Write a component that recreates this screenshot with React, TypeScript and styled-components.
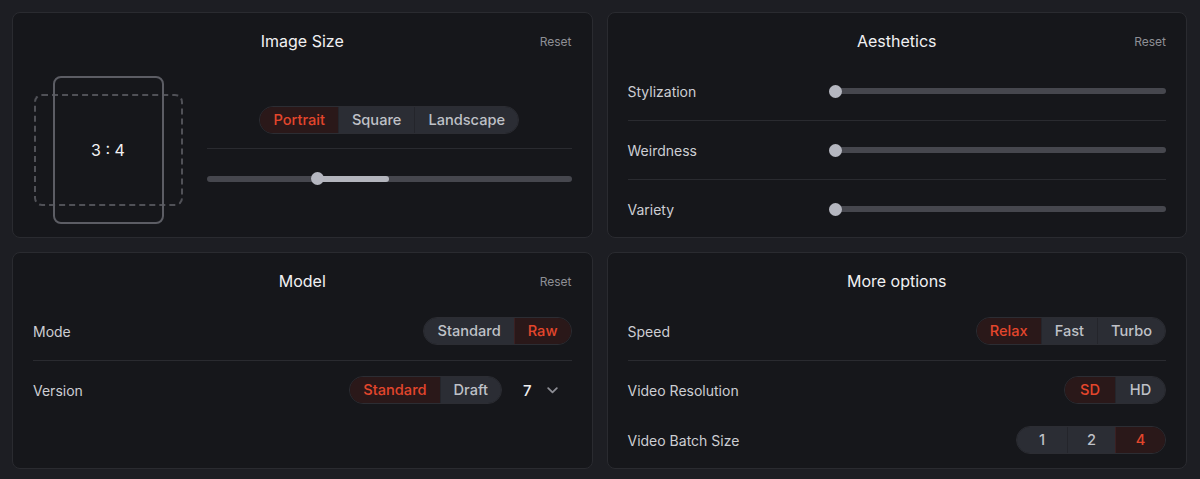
import styled, { createGlobalStyle } from "styled-components";

const GlobalStyle = createGlobalStyle`
  html, body {
    margin: 0;
    padding: 0;
    background: #1d1e23;
    font-family: Inter, "Noto Sans", sans-serif;
    color: #c9cacf;
  }
  * { box-sizing: border-box; }
`;

const Page = styled.div`
  display: grid;
  grid-template-columns: 1fr 1fr;
  grid-template-rows: 226px 217px;
  gap: 14px;
  padding: 12px 13px 12px 12px;
  width: 1200px;
  height: 479px;
`;

const Panel = styled.section`
  background: #16171b;
  border: 1px solid #2a2b30;
  border-radius: 8px;
  padding: 0 20px;
  display: flex;
  flex-direction: column;
`;

const Header = styled.div`
  display: grid;
  grid-template-columns: 1fr auto 1fr;
  align-items: center;
  padding-top: 17px;
  height: 39px;
`;

const Title = styled.h2`
  grid-column: 2;
  margin: 0;
  font-size: 16px;
  line-height: 22px;
  font-weight: 400;
  color: #f1f1f3;
`;

const Reset = styled.button`
  grid-column: 3;
  justify-self: end;
  background: none;
  border: none;
  padding: 0;
  font-family: inherit;
  font-size: 12px;
  color: #8e8f95;
  cursor: pointer;
`;

const Rows = styled.div`
  padding-top: 14px;
  display: flex;
  flex-direction: column;
`;

const Row = styled.div`
  height: 50px;
  display: flex;
  align-items: center;
  justify-content: space-between;
`;

const SliderRow = styled(Row)`
  display: grid;
  grid-template-columns: 201px 1fr;
`;

const Label = styled.span`
  font-size: 14px;
  color: #cdced3;
`;

const Divider = styled.hr<{ $gap?: string }>`
  border: none;
  height: 1px;
  background: #2a2b30;
  margin: ${(p) => p.$gap ?? "4px 0"};
  width: 100%;
`;

const Segmented = styled.div`
  display: inline-flex;
  height: 28px;
  border-radius: 14px;
  overflow: hidden;
  border: 1px solid #2c2d33;
`;

const Segment = styled.button<{ $active?: boolean; $min?: number }>`
  min-width: ${(p) => p.$min ?? 0}px;
  padding: 0 13px;
  border: none;
  border-left: 1px solid ${(p) => (p.$active ? "#3a2022" : "#24252b")};
  &:first-child {
    border-left: none;
  }
  background: ${(p) => (p.$active ? "#2a1819" : "#2b2d34")};
  color: ${(p) => (p.$active ? "#e3462c" : "#bfc1c7")};
  font-family: inherit;
  font-size: 14.6px;
  font-weight: 500;
  display: flex;
  align-items: center;
  justify-content: center;
  cursor: pointer;
`;

const SizeBody = styled.div`
  flex: 1;
  display: flex;
  align-items: center;
  gap: 24px;
  padding-top: 10px;
`;

const Preview = styled.div`
  width: 150px;
  height: 150px;
  flex: none;
  display: grid;
  place-items: center;
`;

const Frame = styled.div<{ $w: number; $h: number; $dashed?: boolean }>`
  grid-area: 1 / 1;
  width: ${(p) => p.$w}px;
  height: ${(p) => p.$h}px;
  border: 2px ${(p) => (p.$dashed ? "dashed #505157" : "solid #5c5d64")};
  border-radius: 8px;
`;

const Ratio = styled.span`
  grid-area: 1 / 1;
  font-size: 16px;
  color: #f1f1f3;
`;

const SizeControls = styled.div`
  flex: 1;
  display: flex;
  flex-direction: column;
  align-items: center;
  padding-bottom: 8px;
`;

const Track = styled.div`
  position: relative;
  width: 100%;
  height: 6px;
  border-radius: 3px;
  background: #46474e;
`;

const Fill = styled.div<{ $from: number; $to: number }>`
  position: absolute;
  top: 0;
  bottom: 0;
  left: ${(p) => p.$from}%;
  width: ${(p) => p.$to - p.$from}%;
  background: #b3b5bd;
  border-radius: 3px;
`;

const Thumb = styled.div<{ $at: number }>`
  position: absolute;
  top: 50%;
  left: calc(${(p) => p.$at} * (100% - 12px));
  width: 13px;
  height: 13px;
  margin-top: -6.5px;
  border-radius: 50%;
  background: #b5b7c0;
`;

const SliderBox = styled.div`
  width: 100%;
  height: 13px;
  display: flex;
  align-items: center;
`;

const VersionControls = styled.div`
  display: flex;
  align-items: center;
`;

const Select = styled.button`
  display: flex;
  align-items: center;
  gap: 15px;
  margin-left: 12px;
  padding: 0 14px 0 9px;
  height: 28px;
  background: none;
  border: none;
  font-family: inherit;
  font-size: 15px;
  font-weight: 500;
  color: #eeeef0;
`;

const Chevron = () => (
  <svg width="11" height="7" viewBox="0 0 11 7" fill="none">
    <path
      d="M1.2 1.2L5.5 5.3L9.8 1.2"
      stroke="#8d8e95"
      strokeWidth="1.8"
      strokeLinecap="round"
      strokeLinejoin="round"
    />
  </svg>
);

const Slider = ({ at, fill }: { at: number; fill?: [number, number] }) => (
  <SliderBox>
    <Track>
      {fill && <Fill $from={fill[0]} $to={fill[1]} />}
      <Thumb $at={at} />
    </Track>
  </SliderBox>
);

export default function App() {
  return (
    <>
      <GlobalStyle />
      <Page>
        <Panel>
          <Header>
            <Title>Image Size</Title>
            <Reset>Reset</Reset>
          </Header>
          <SizeBody>
            <Preview>
              <Frame $w={149} $h={112} $dashed />
              <Frame $w={111} $h={148} />
              <Ratio>3 : 4</Ratio>
            </Preview>
            <SizeControls>
              <Segmented>
                <Segment $active>Portrait</Segment>
                <Segment>Square</Segment>
                <Segment>Landscape</Segment>
              </Segmented>
              <Divider $gap="14px 0 23px" />
              <Slider at={0.295} fill={[30, 50]} />
            </SizeControls>
          </SizeBody>
        </Panel>

        <Panel>
          <Header>
            <Title>Aesthetics</Title>
            <Reset>Reset</Reset>
          </Header>
          <Rows>
            <SliderRow>
              <Label>Stylization</Label>
              <Slider at={0} />
            </SliderRow>
            <Divider />
            <SliderRow>
              <Label>Weirdness</Label>
              <Slider at={0} />
            </SliderRow>
            <Divider />
            <SliderRow>
              <Label>Variety</Label>
              <Slider at={0} />
            </SliderRow>
          </Rows>
        </Panel>

        <Panel>
          <Header>
            <Title>Model</Title>
            <Reset>Reset</Reset>
          </Header>
          <Rows>
            <Row>
              <Label>Mode</Label>
              <Segmented>
                <Segment>Standard</Segment>
                <Segment $active>Raw</Segment>
              </Segmented>
            </Row>
            <Divider />
            <Row>
              <Label>Version</Label>
              <VersionControls>
                <Segmented>
                  <Segment $active>Standard</Segment>
                  <Segment>Draft</Segment>
                </Segmented>
                <Select>
                  7
                  <Chevron />
                </Select>
              </VersionControls>
            </Row>
          </Rows>
        </Panel>

        <Panel>
          <Header>
            <Title>More options</Title>
          </Header>
          <Rows>
            <Row>
              <Label>Speed</Label>
              <Segmented>
                <Segment $active>Relax</Segment>
                <Segment>Fast</Segment>
                <Segment>Turbo</Segment>
              </Segmented>
            </Row>
            <Divider />
            <Row>
              <Label>Video Resolution</Label>
              <Segmented>
                <Segment $active $min={50}>SD</Segment>
                <Segment $min={50}>HD</Segment>
              </Segmented>
            </Row>
            <Row>
              <Label>Video Batch Size</Label>
              <Segmented>
                <Segment $min={50}>1</Segment>
                <Segment $min={48}>2</Segment>
                <Segment $active $min={50}>4</Segment>
              </Segmented>
            </Row>
          </Rows>
        </Panel>
      </Page>
    </>
  );
}
